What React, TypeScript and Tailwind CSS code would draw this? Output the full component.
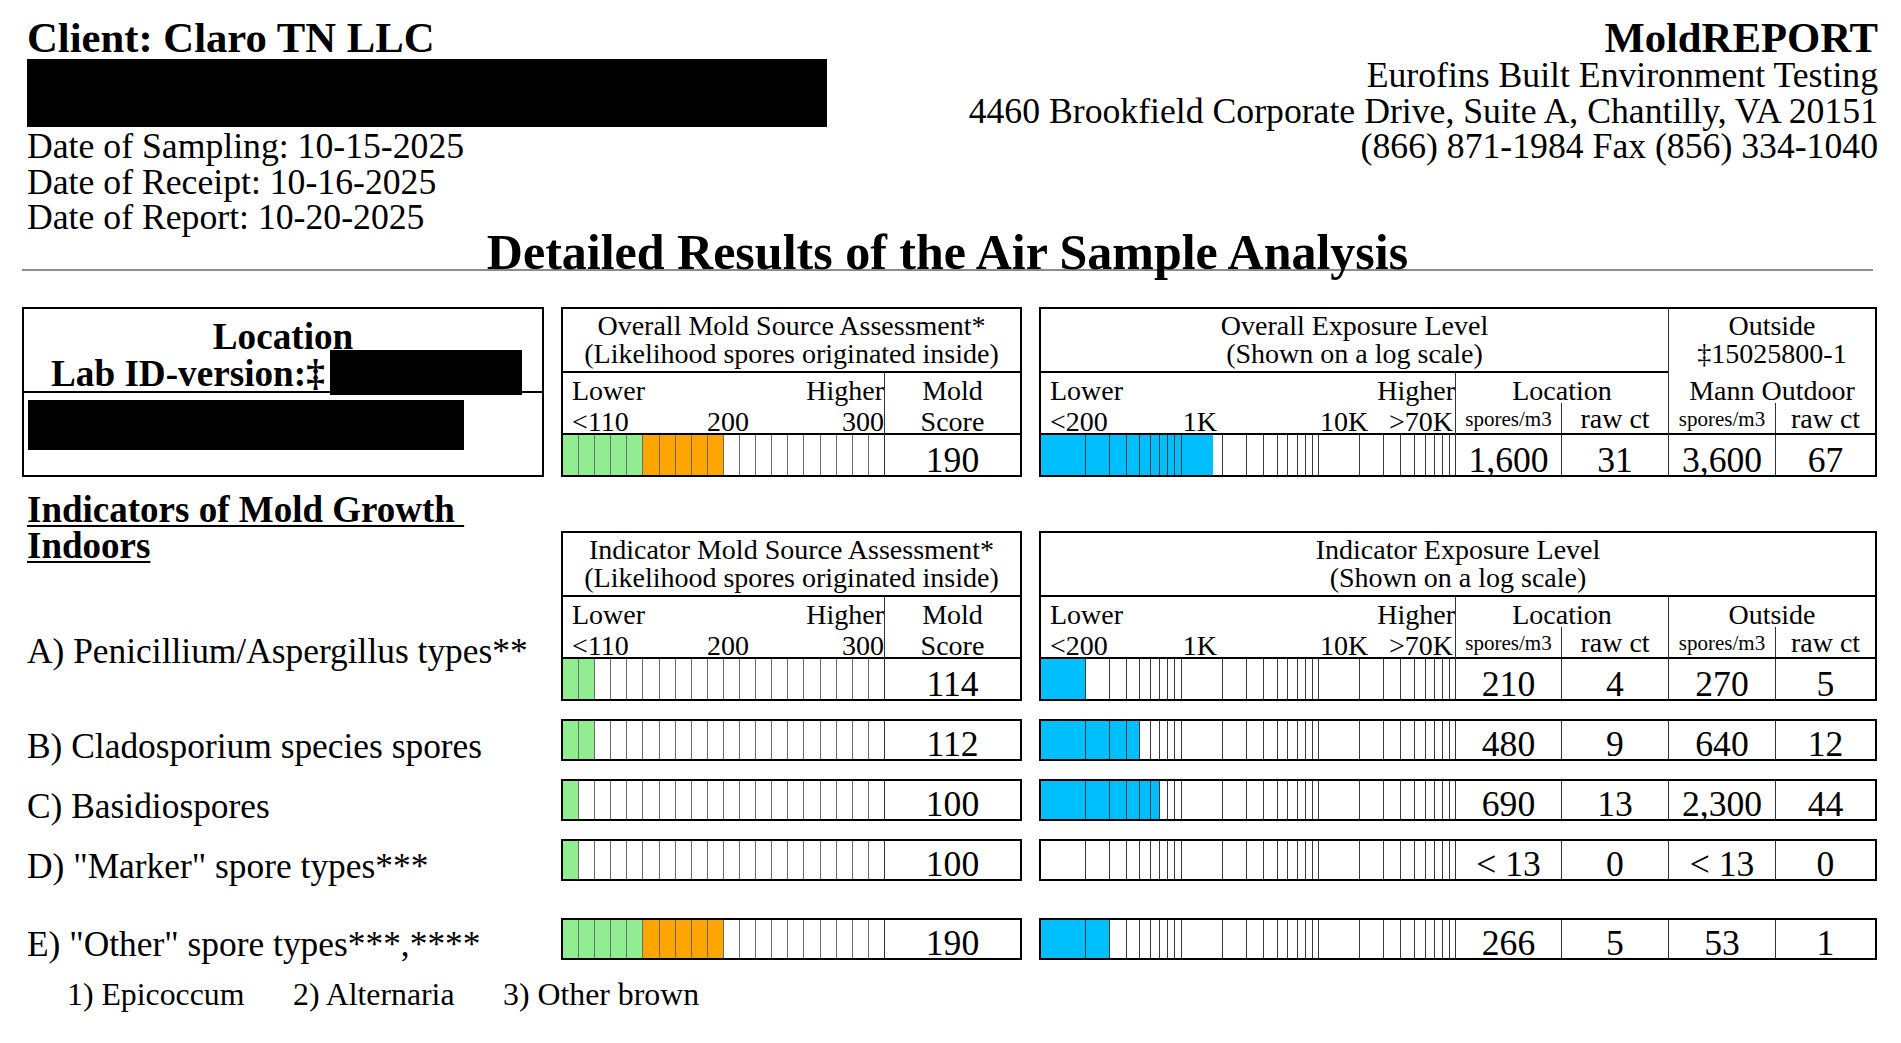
import clsx from 'clsx'

const SCALE_W = 414

// log scale 100 .. 100K, ticks at 2..10 of each decade
const ticks: number[] = []
for (let d = 0; d < 3; d++) {
  for (let k = 2; k <= 10; k++) {
    const p = (d + Math.log10(k)) / 3
    if (p < 0.999) ticks.push(p)
  }
}

function MoldCells({ green, orange, className }: { green: number; orange: number; className?: string }) {
  return (
    <div className={clsx('flex w-[321px] shrink-0', className)}>
      {Array.from({ length: 20 }).map((_, i) => (
        <div
          key={i}
          className={clsx(
            'flex-1',
            i > 0 && 'border-l border-[#6b6b6b]',
            i < green ? 'bg-[#90ee90]' : i < green + orange ? 'bg-[#ffa500]' : 'bg-white'
          )}
        />
      ))}
    </div>
  )
}

function LogBar({ fill, h }: { fill: number; h: number }) {
  return (
    <svg width={SCALE_W} height={h} className="block shrink-0">
      {fill > 0 && <rect x={0} y={0} width={fill} height={h} fill="#00bfff" />}
      {ticks.map((p, i) => {
        const x = Math.round(2.5 + p * (SCALE_W - 2.5)) + 0.5
        return <line key={i} x1={x} x2={x} y1={0} y2={h} stroke="#3a3a3a" strokeWidth={1} />
      })}
    </svg>
  )
}

function Num({ children, className }: { children: React.ReactNode; className?: string }) {
  return (
    <div className={clsx('flex items-end justify-center text-[35.6px] leading-[30px] whitespace-nowrap', className)}>
      {children}
    </div>
  )
}

function ScaleHead({ low, mid, high }: { low: string; mid: string; high: string }) {
  return (
    <div className="h-[62px] shrink-0 border-b-2 border-black pt-[2px] pl-[9px] text-[28px] leading-[31px]">
      <div className="flex justify-between">
        <span>Lower</span>
        <span>Higher</span>
      </div>
      <div className="grid grid-cols-3">
        <span>{low}</span>
        <span className="text-center">{mid}</span>
        <span className="text-right">{high}</span>
      </div>
    </div>
  )
}

function LogHead() {
  return (
    <div className="h-[62px] shrink-0 border-b-2 border-black pt-[2px] pl-[9px] text-[28px] leading-[31px]">
      <div className="flex justify-between">
        <span>Lower</span>
        <span>Higher</span>
      </div>
      <div className="flex">
        <span>&lt;200</span>
        <span className="ml-[75px]">1K</span>
        <span className="ml-[103px]">10K</span>
        <span className="ml-auto pr-[2px]">&gt;70K</span>
      </div>
    </div>
  )
}

function SubHead({ label, first }: { label: string; first: string }) {
  return (
    <div className="h-[62px] shrink-0 border-b-2 border-black flex flex-col text-[28px]">
      <div className="h-[30px] pt-[3px] leading-[30px] text-center whitespace-nowrap">{label}</div>
      <div className="flex flex-1">
        <div className={clsx(first, 'flex items-end justify-center pb-[3px] text-[21px] leading-[21px]')}>spores/m3</div>
        <div className="flex-1 border-l border-[#333] flex items-end justify-center leading-[28px]">raw ct</div>
      </div>
    </div>
  )
}

function MoldBox({ title, green, orange, score }: { title: string; green: number; orange: number; score: string }) {
  return (
    <div className="w-[461px] h-[170px] border-2 border-black flex flex-col">
      <div className="h-[64px] shrink-0 border-b-2 border-black pt-[3px] text-center text-[28px] leading-[28px]">
        {title}
        <br />
        (Likelihood spores originated inside)
      </div>
      <div className="flex h-[102px]">
        <div className="w-[321px] flex flex-col">
          <ScaleHead low="<110" mid="200" high="300" />
          <MoldCells green={green} orange={orange} className="h-[40px]" />
        </div>
        <div className="flex-1 border-l border-[#333] flex flex-col">
          <div className="h-[62px] shrink-0 border-b-2 border-black pt-[2px] text-center text-[28px] leading-[31px]">
            Mold
            <br />
            Score
          </div>
          <Num className="h-[40px]">{score}</Num>
        </div>
      </div>
    </div>
  )
}

type Vals = [string, string, string, string]

function ValueCells({ v }: { v: Vals }) {
  return (
    <>
      <Num className="w-[106px] border-l border-[#333]">{v[0]}</Num>
      <Num className="w-[107px] border-l border-[#333]">{v[1]}</Num>
      <Num className="w-[107px] border-l border-[#333]">{v[2]}</Num>
      <Num className="flex-1 border-l border-[#333]">{v[3]}</Num>
    </>
  )
}

function OverallExposure() {
  return (
    <div className="w-[838px] h-[170px] border-2 border-black flex">
      <div className="w-[627px] flex flex-col">
        <div className="h-[64px] shrink-0 border-b-2 border-black pt-[3px] text-center text-[28px] leading-[28px]">
          Overall Exposure Level
          <br />
          (Shown on a log scale)
        </div>
        <div className="flex h-[102px]">
          <div className="w-[414px] flex flex-col">
            <LogHead />
            <LogBar fill={172} h={40} />
          </div>
          <div className="flex-1 border-l border-[#333] flex flex-col">
            <SubHead label="Location" first="w-[105px]" />
            <div className="flex h-[40px]">
              <Num className="w-[105px]">1,600</Num>
              <Num className="flex-1 border-l border-[#333]">31</Num>
            </div>
          </div>
        </div>
      </div>
      <div className="flex-1 border-l border-[#333] flex flex-col">
        <div className="h-[64px] shrink-0 pt-[3px] text-center text-[28px] leading-[28px]">
          Outside
          <br />
          ‡15025800-1
        </div>
        <SubHead label="Mann Outdoor" first="w-[106px]" />
        <div className="flex h-[40px]">
          <Num className="w-[106px]">3,600</Num>
          <Num className="flex-1 border-l border-[#333]">67</Num>
        </div>
      </div>
    </div>
  )
}

function IndicatorExposure() {
  return (
    <div className="w-[838px] h-[170px] border-2 border-black flex flex-col">
      <div className="h-[64px] shrink-0 border-b-2 border-black pt-[3px] text-center text-[28px] leading-[28px]">
        Indicator Exposure Level
        <br />
        (Shown on a log scale)
      </div>
      <div className="flex h-[102px]">
        <div className="w-[414px] flex flex-col">
          <LogHead />
          <LogBar fill={45} h={40} />
        </div>
        <div className="w-[213px] border-l border-[#333] flex flex-col">
          <SubHead label="Location" first="w-[105px]" />
          <div className="flex h-[40px]">
            <Num className="w-[105px]">210</Num>
            <Num className="flex-1 border-l border-[#333]">4</Num>
          </div>
        </div>
        <div className="flex-1 border-l border-[#333] flex flex-col">
          <SubHead label="Outside" first="w-[106px]" />
          <div className="flex h-[40px]">
            <Num className="w-[106px]">270</Num>
            <Num className="flex-1 border-l border-[#333]">5</Num>
          </div>
        </div>
      </div>
    </div>
  )
}

const rows: { mt: string; green: number; orange: number; score: string; fill: number; v: Vals }[] = [
  { mt: 'mt-[18px]', green: 2, orange: 0, score: '112', fill: 98, v: ['480', '9', '640', '12'] },
  { mt: 'mt-[18px]', green: 1, orange: 0, score: '100', fill: 119, v: ['690', '13', '2,300', '44'] },
  { mt: 'mt-[18px]', green: 1, orange: 0, score: '100', fill: 0, v: ['< 13', '0', '< 13', '0'] },
  { mt: 'mt-[37px]', green: 5, orange: 5, score: '190', fill: 69, v: ['266', '5', '53', '1'] },
]

export default function App() {
  return (
    <div className="w-[1901px] h-[1043px] overflow-hidden bg-white text-black font-['Liberation_Serif',serif]">
      {/* header */}
      <div className="flex justify-between pl-[27px] pr-[23px] pt-[18px] text-[35.7px] leading-[35.5px]">
        <div>
          <div className="font-bold text-[42.7px] leading-[40px]">Client: Claro TN LLC</div>
          <div className="w-[800px] h-[68px] bg-black mt-[1px] mb-[2px]" />
          <div>Date of Sampling: 10-15-2025</div>
          <div>Date of Receipt: 10-16-2025</div>
          <div>Date of Report: 10-20-2025</div>
        </div>
        <div className="text-right">
          <div className="font-bold text-[42.7px] leading-[40px]">MoldREPORT</div>
          <div>Eurofins Built Environment Testing</div>
          <div>4460 Brookfield Corporate Drive, Suite A, Chantilly, VA 20151</div>
          <div>(866) 871-1984 Fax (856) 334-1040</div>
        </div>
      </div>

      <div className="-mt-[9px] ml-[22px] w-[1851px] h-[44px] border-b-2 border-[#8c8c8c] text-center font-bold text-[50px] leading-[50px]">
        Detailed Results of the Air Sample Analysis
      </div>

      <div className="flex mt-[36px] pl-[22px]">
        {/* left column */}
        <div className="w-[522px] mr-[17px] shrink-0 flex flex-col">
          <div className="h-[170px] border-2 border-black flex flex-col">
            <div className="h-[84px] shrink-0 border-b-2 border-black pt-[9px] font-bold text-[37.2px] leading-[37.5px]">
              <div className="text-center">Location</div>
              <div className="pl-[27px] whitespace-nowrap">
                Lab ID-version:‡
                <span className="relative -top-[5.5px] inline-block align-top ml-[5px] w-[192px] h-[45px] bg-black" />
              </div>
            </div>
            <div className="ml-[4px] mt-[7px] w-[436px] h-[50px] bg-black" />
          </div>

          <div className="mt-[15.5px] ml-[5px] font-bold text-[37px] leading-[36px] underline decoration-2 underline-offset-[3px] whitespace-nowrap">
            Indicators of Mold Growth&nbsp;
            <br />
            Indoors
          </div>

          <div className="ml-[5px] text-[35.4px] leading-[36px] whitespace-nowrap">
            <div className="mt-[68.5px]">A) Penicillium/Aspergillus types**</div>
            <div className="mt-[59px]">B) Cladosporium species spores</div>
            <div className="mt-[24px]">C) Basidiospores</div>
            <div className="mt-[24px]">D) "Marker" spore types***</div>
            <div className="mt-[42px]">E) "Other" spore types***,****</div>
          </div>
          <div className="mt-[17.4px] ml-[45px] flex text-[31.8px] leading-[32px] whitespace-nowrap">
            <span className="w-[226px] shrink-0">1) Epicoccum</span>
            <span className="w-[210px] shrink-0">2) Alternaria</span>
            <span>3) Other brown</span>
          </div>
        </div>

        {/* right column */}
        <div className="flex flex-col">
          <div className="flex gap-[17px]">
            <MoldBox title="Overall Mold Source Assessment*" green={5} orange={5} score="190" />
            <OverallExposure />
          </div>

          <div className="flex gap-[17px] mt-[54px]">
            <MoldBox title="Indicator Mold Source Assessment*" green={2} orange={0} score="114" />
            <IndicatorExposure />
          </div>

          {rows.map((r, i) => (
            <div key={i} className={clsx('flex gap-[17px]', r.mt)}>
              <div className="w-[461px] h-[42px] border-2 border-black flex">
                <MoldCells green={r.green} orange={r.orange} />
                <Num className="flex-1 border-l border-[#333]">{r.score}</Num>
              </div>
              <div className="w-[838px] h-[42px] border-2 border-black flex">
                <LogBar fill={r.fill} h={38} />
                <ValueCells v={r.v} />
              </div>
            </div>
          ))}
        </div>
      </div>
    </div>
  )
}
